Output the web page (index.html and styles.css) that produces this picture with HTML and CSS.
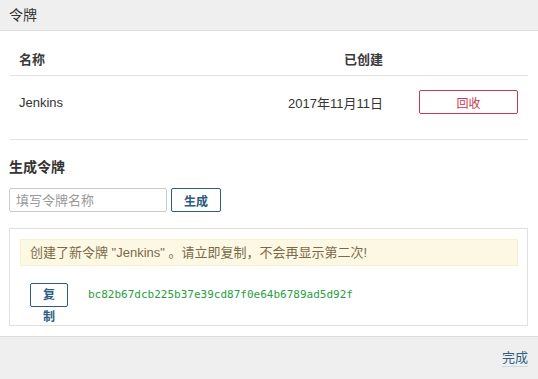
FILE: index.html
```html
<!DOCTYPE html>
<html lang="zh-CN">
<head>
<meta charset="UTF-8" />
<meta name="viewport" content="width=device-width, initial-scale=1" />
<title>令牌</title>
<link rel="stylesheet" href="styles.css">
</head>
<body>

<div class="dialog">
  <div class="dialog-header">令牌</div>

  <div class="dialog-body">
    <div class="token-table">
      <div class="row row-head">
        <div class="cell cell-name">名称</div>
        <div class="cell cell-date">已创建</div>
        <div class="cell cell-action"></div>
      </div>
      <div class="row">
        <div class="cell cell-name">Jenkins</div>
        <div class="cell cell-date">2017年11月11日</div>
        <div class="cell cell-action"><button class="btn btn-revoke">回收</button></div>
      </div>
    </div>

    <hr class="divider" />

    <h3 class="section-title">生成令牌</h3>
    <div class="generate-row">
      <input class="token-input" type="text" placeholder="填写令牌名称" />
      <button class="btn btn-primary">生成</button>
    </div>

    <div class="new-token">
      <div class="alert">创建了新令牌 "Jenkins" 。请立即复制，不会再显示第二次!</div>
      <div class="copy-row">
        <span class="btn-copy">复制</span>
        <code class="token-value">bc82b67dcb225b37e39cd87f0e64b6789ad5d92f</code>
      </div>
    </div>
  </div>

  <div class="dialog-footer">
    <a class="link-done" href="#">完成</a>
  </div>
</div>

</body>
</html>
```

FILE: styles.css
```css
body {
  margin: 0;
  font-family: "Liberation Sans", "Noto Sans CJK SC", sans-serif;
  color: #333;
  background: white;
}

/* Dialog frame */
.dialog {
  height: 379px;
  display: flex;
  flex-direction: column;
}

.dialog-header {
  height: 30px;
  line-height: 30px;
  padding: 0 9px;
  font-size: 14px;
  background: #efefef;
  border-bottom: 1px solid #dcdcdc;
}

.dialog-body {
  flex: 1;
  padding: 10px 10px 10px 9px;
}

/* Token table */
.token-table {
  margin-left: 1px;
  font-size: 13px;
}

.row {
  display: flex;
  align-items: center;
  height: 52px;
}

.row-head {
  height: 34px;
  font-weight: bold;
  color: #3a3a3a;
  border-bottom: 1px solid #e3e3e3;
}

.cell-name {
  width: 150px;
  padding-left: 9px;
}

.cell-date {
  width: 214px;
  text-align: right;
}

.cell-action {
  padding-left: 36px;
}

.divider {
  margin: 11px 0 0 1px;
  border: none;
  border-top: 1px solid #e3e3e3;
}

/* Buttons */
.btn {
  cursor: pointer;
  background: white;
  border-radius: 2px;
  font-family: inherit;
  font-size: 12px;
  padding: 0;
}

.btn-revoke {
  width: 99px;
  height: 24px;
  border: 1px solid #c43c50;
  color: #c43c50;
}

.btn-primary {
  width: 50px;
  height: 24px;
  border: 1px solid #2d5c80;
  color: #2d5c80;
  font-weight: bold;
}

/* Generate form */
.section-title {
  margin: 17px 0 0;
  font-size: 14px;
  line-height: 20px;
}

.generate-row {
  display: flex;
  gap: 4px;
  margin-top: 11px;
}

.token-input {
  box-sizing: border-box;
  width: 158px;
  height: 24px;
  margin: 0;
  padding: 0 6px;
  border: 1px solid #ccc;
  border-radius: 2px;
  font-family: inherit;
  font-size: 13px;
}

.token-input::placeholder {
  color: #999;
}

/* New token box */
.new-token {
  margin-top: 16px;
  border: 1px solid #e0e0e0;
  padding: 10px 9px 18px 10px;
}

.alert {
  line-height: 25px;
  padding: 0 9px;
  font-size: 13px;
  color: #7b6a4a;
  background: #fcf8e3;
  border: 1px solid #f6efd2;
}

.copy-row {
  display: flex;
  align-items: flex-start;
  margin-top: 17px;
  height: 24px;
}

.btn-copy {
  box-sizing: border-box;
  width: 38px;
  height: 24px;
  margin-left: 10px;
  padding: 0 11px;
  line-height: 22px;
  border: 1px solid #2d5c80;
  border-radius: 2px;
  text-align: center;
  font-size: 12px;
  font-weight: bold;
  color: #2d5c80;
}

.token-value {
  margin-left: 20px;
  line-height: 24px;
  font-family: "DejaVu Sans Mono", monospace;
  font-size: 11px;
  color: #26a040;
}

/* Footer */
.dialog-footer {
  display: flex;
  justify-content: flex-end;
  align-items: center;
  height: 42px;
  padding: 0 10px;
  background: #efefef;
  border-top: 1px solid #dcdcdc;
}

.link-done {
  font-size: 13px;
  color: #2f5f85;
  text-decoration: none;
  border-bottom: 1px solid #c9dbe8;
  line-height: 16px;
}
```
